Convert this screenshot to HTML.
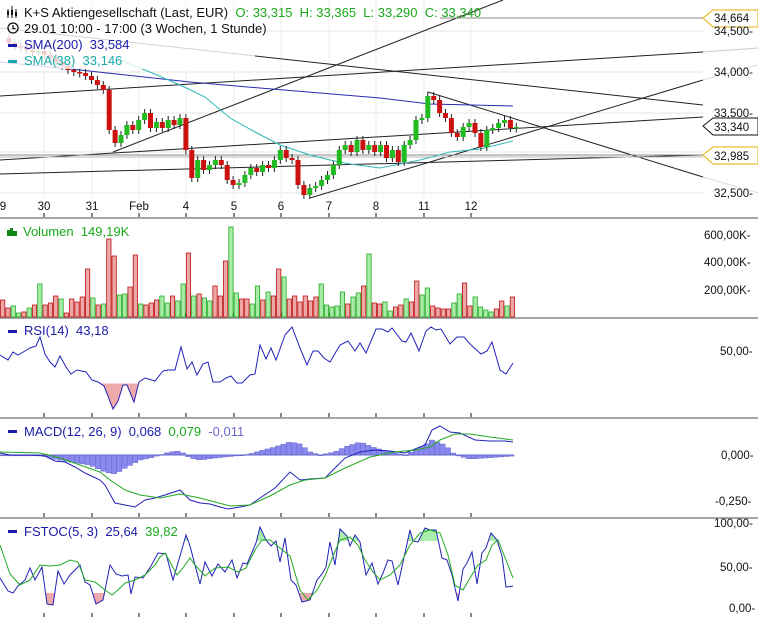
<!DOCTYPE html>
<html><head><meta charset="utf-8">
<style>
html,body{margin:0;padding:0;background:#fff;}
body{width:758px;height:618px;overflow:hidden;position:relative;font-family:"Liberation Sans",sans-serif;}
svg{position:absolute;left:0;top:0;}
.t{font-family:"Liberation Sans",sans-serif;font-size:13px;white-space:pre;}
.ax{font-family:"Liberation Sans",sans-serif;font-size:11.5px;fill:#111;}
</style></head><body>
<svg id="s" width="758" height="618" xmlns="http://www.w3.org/2000/svg">
<g id="grid"></g>
<g id="lines"></g>
<g id="cand"></g>
<g id="ind"></g>
<rect x="0" y="3" width="255" height="66" fill="#fff" opacity="0.8"/>
<g id="leg">
<text class="t" x="24" y="17" fill="#111">K+S Aktiengesellschaft (Last, EUR)  <tspan fill="#1aaa1a">O: 33,315  H: 33,365  L: 33,290  C: 33,340</tspan></text>
<text class="t" x="24" y="33" fill="#111">29.01 10:00 - 17:00 (3 Wochen, 1 Stunde)</text>
<text class="t" x="24" y="49" fill="#1a1aaa">SMA(200)  33,584</text>
<text class="t" x="24" y="65" fill="#1aaaaa">SMA(38)  33,146</text>
<rect x="8" y="44" width="9" height="3" fill="#1a1aaa"/>
<rect x="8" y="60" width="9" height="3" fill="#1aaaaa"/>
<circle cx="13" cy="28" r="5" fill="none" stroke="#111" stroke-width="1.3"/>
<path d="M13 25v3.5h2.5" stroke="#111" fill="none" stroke-width="1.2"/>
<path d="M8 9v9M12 6v12M16 9v9" stroke="#111"/>
<rect x="7" y="11" width="2" height="4" fill="#111"/><rect x="11" y="10" width="2" height="5" fill="#111"/><rect x="15" y="12" width="2" height="4" fill="#111"/>
<rect x="7" y="230" width="3" height="6" fill="#118811"/><rect x="10" y="228" width="3" height="8" fill="#118811"/><rect x="13" y="231" width="4" height="5" fill="#118811"/>
<text class="t" x="23" y="236" fill="#1aaa1a">Volumen  149,19K</text>
<rect x="8" y="330" width="9" height="3" fill="#1a1aaa"/>
<text class="t" x="24" y="335" fill="#1a1aaa">RSI(14)  43,18</text>
<rect x="8" y="430" width="9" height="3" fill="#1a1aaa"/>
<text class="t" x="24" y="436" fill="#1a1aaa">MACD(12, 26, 9)  0,068  <tspan fill="#1aaa1a">0,079</tspan>  <tspan fill="#6a6ad0">-0,011</tspan></text>
<rect x="8" y="530" width="9" height="3" fill="#1a1aaa"/>
<text class="t" x="24" y="536" fill="#1a1aaa">FSTOC(5, 3)  25,64  <tspan fill="#1aaa1a">39,82</tspan></text>
</g>
<g id="axis">
<path d="M703 18L713 10H758V27H713Z" fill="#fff" stroke="#e0b000"/>
<text class="ax" x="714" y="22">34,664</text>
<path d="M703 126L713 118H758V135H713Z" fill="#fff" stroke="#111"/>
<text class="ax" x="714" y="131">33,340</text>
<path d="M703 155L713 147H758V164H713Z" fill="#fff" stroke="#e0b000"/>
<text class="ax" x="714" y="160">32,985</text>
<text class="ax" x="714" y="35">34,500-</text>
<text class="ax" x="714" y="76">34,000-</text>
<text class="ax" x="714" y="117">33,500-</text>
<text class="ax" x="714" y="197">32,500-</text>
<text class="ax" x="704" y="239">600,00K-</text>
<text class="ax" x="704" y="266">400,00K-</text>
<text class="ax" x="704" y="294">200,00K-</text>
<text class="ax" x="720" y="355">50,00-</text>
<text class="ax" x="721" y="459">0,000-</text>
<text class="ax" x="715" y="505">-0,250-</text>
<text class="ax" x="714" y="527">100,00-</text>
<text class="ax" x="720" y="571">50,00-</text>
<text class="ax" x="729" y="612">0,00-</text>
<g class="ax" text-anchor="middle">
<text x="3" y="210">9</text><text x="44" y="210">30</text><text x="92" y="210">31</text><text x="139" y="210">Feb</text><text x="186" y="210">4</text><text x="234" y="210">5</text><text x="281" y="210">6</text><text x="329" y="210">7</text><text x="376" y="210">8</text><text x="424" y="210">11</text><text x="471" y="210">12</text>
</g>
</g>
</svg>
<script>
(function(){
var NS="http://www.w3.org/2000/svg";
function el(g,tag,a){var e=document.createElementNS(NS,tag);for(var k in a)e.setAttribute(k,a[k]);document.getElementById(g).appendChild(e);return e;}
function pl(g,pts,col,w){el(g,"polyline",{points:pts.map(function(p){return p.join(",")}).join(" "),fill:"none",stroke:col,"stroke-width":w||1});}
[31,72,113,152,193].forEach(function(y){el("grid","line",{x1:0,x2:703,y1:y,y2:y,stroke:"#e4e4e4"});});
var days=[44,92,139,186,234,281,329,376,424,471];
days.forEach(function(x){el("grid","line",{x1:x,x2:x,y1:0,y2:198,stroke:"#eeeeee"});
[213,313,413,513,613].forEach(function(y){el("grid","line",{x1:x,x2:x,y1:y,y2:y+4,stroke:"#111"});});});
[218,318,418,518].forEach(function(y){el("grid","line",{x1:0,x2:758,y1:y,y2:y,stroke:"#888","stroke-width":1.5});});
var L=[[113,152,503,0],[0,28,703,105],[0,96,703,52],[0,160,703,117],[0,174,703,155],[428,92,703,177],[310,198,703,80]];
L.forEach(function(l){el("lines","line",{x1:l[0],y1:l[1],x2:l[2],y2:l[3],stroke:"#222"});});
el("lines","line",{x1:0,y1:155,x2:703,y2:155,stroke:"#888"});
el("lines","line",{x1:0,y1:157,x2:703,y2:157,stroke:"#bbb"});
el("lines","line",{x1:440,y1:18,x2:703,y2:18,stroke:"#888"});
el("lines","line",{x1:703,y1:52,x2:758,y2:48,stroke:"#ccc"});
el("lines","line",{x1:703,y1:80,x2:758,y2:65,stroke:"#ddd"});
el("lines","line",{x1:703,y1:177,x2:758,y2:193,stroke:"#ddd"});
pl("lines",[[0,62],[80,70],[190,82],[260,88],[380,98],[430,104],[513,106]],"#2a2ab0");
pl("lines",[[120,60],[150,72],[180,85],[205,97],[230,118],[255,132],[280,145],[310,155],[330,160],[350,164],[380,168],[420,160],[450,152],[480,149],[513,141]],"#30b8b8");
var c=[38,43,46,47,50,52,51,55,58,62,66,70,72,73,76,80,85,90,130,143,135,125,130,120,113,128,122,128,120,125,118,150,178,160,170,165,160,165,180,185,183,175,168,172,165,168,160,150,158,160,185,195,188,186,180,175,165,150,145,152,140,150,145,152,145,158,150,162,145,140,120,118,96,100,113,118,133,137,127,123,133,147,130,128,123,120,128,127];
for(var i=1;i<c.length;i++){var x=3+i*5.9;var o=c[i-1],cl=c[i];var up=cl<o;var tp=Math.min(o,cl),bt=Math.max(o,cl);if(bt-tp<1.5)bt=tp+1.5;
el("cand","line",{x1:x,x2:x,y1:tp-4,y2:bt+4,stroke:"#222"});
el("cand","rect",{x:x-2.5,y:tp,width:5,height:bt-tp,fill:up?"#22bb22":"#cc1111"});}
var v=[300,308,306,313,312,308,305,284,305,303,296,299,313,299,302,297,269,298,305,304,239,256,295,294,287,255,304,305,303,300,296,303,296,301,284,253,296,294,298,301,286,296,261,227,293,299,299,304,286,300,292,296,269,277,299,296,302,296,301,297,284,305,307,306,292,304,297,293,286,254,303,304,302,311,307,305,299,302,281,295,288,306,308,309,309,303,294,283,306,297,307,310,312,309,301,306,297];
var col="rrggrgrgrrrgrrrrrgrgrrggrrgrrrggrggrgrggrrrggrrggrgrrgrrrrrrgggggrggrgrrggrrgrrggrrrrggrrggggrrg";
var n=v.length,st=515/n;
for(var i=0;i<n;i++){var g=col[i]=="g";el("ind","rect",{x:i*st+0.5,y:v[i],width:st-1,height:317-v[i],fill:g?"#a8eca8":"#eea8a8",stroke:g?"#22aa22":"#bb1111","stroke-width":0.8});}
var r=[[0,355],[8,360],[13,352],[18,355],[25,351],[30,348],[36,346],[40,337],[45,354],[50,362],[55,367],[60,356],[66,367],[71,374],[77,370],[86,372],[92,380],[98,382],[104,386],[113,409],[118,401],[123,385],[127,385],[134,402],[139,382],[145,378],[155,381],[163,371],[168,370],[175,370],[181,347],[187,369],[192,362],[197,375],[203,364],[208,362],[213,382],[220,382],[226,378],[231,376],[237,383],[242,383],[250,375],[255,374],[260,345],[266,359],[271,348],[276,360],[285,335],[292,327],[300,348],[307,365],[313,351],[318,351],[324,358],[330,362],[340,345],[348,341],[355,351],[360,343],[366,353],[376,329],[382,329],[388,332],[392,328],[402,341],[406,342],[411,333],[419,351],[426,331],[431,327],[436,330],[441,329],[450,344],[457,337],[464,337],[471,345],[481,354],[487,351],[492,342],[500,370],[506,374],[513,363]];
function fillArea(pts,th,color,below,id){var cp=el("ind","clipPath",{id:id});var rr=document.createElementNS(NS,"rect");rr.setAttribute("x",0);rr.setAttribute("width",520);if(below){rr.setAttribute("y",th);rr.setAttribute("height",100);}else{rr.setAttribute("y",th-100);rr.setAttribute("height",100);}cp.appendChild(rr);
var p=pts.map(function(q){return q.join(",")}).join(" ")+" 513,"+th+" 0,"+th;el("ind","polygon",{points:p,fill:color,"clip-path":"url(#"+id+")"});}
fillArea(r,383.5,"#eeaaaa",true,"c1");
pl("ind",r,"#2222bb");
var h=[[0,455],[40,455],[50,458],[70,462],[90,465],[105,472],[115,474],[125,468],[140,460],[150,458],[160,455],[170,452],[180,451],[190,458],[200,460],[215,458],[235,456],[250,454],[260,451],[275,447],[290,442],[300,444],[310,452],[320,455],[335,452],[345,447],[360,442],[375,448],[390,452],[405,455],[425,445],[432,440],[445,445],[455,455],[470,459],[485,458],[513,456]];
function interp(a,x){for(var i=1;i<a.length;i++){if(x<=a[i][0]){var t=(x-a[i-1][0])/(a[i][0]-a[i-1][0]);return a[i-1][1]+t*(a[i][1]-a[i-1][1]);}}return a[a.length-1][1];}
for(var i=0;i<97;i++){var x=i*5.3+2.6;var y=interp(h,x);el("ind","rect",{x:x-2.6,y:Math.min(y,455),width:5.3,height:Math.max(Math.abs(y-455),0.8),fill:"#8888ee",stroke:"#6666cc","stroke-width":0.5});}
pl("ind",[[0,455],[513,455]],"#6666cc");
pl("ind",[[0,453],[10,455],[30,455],[45,456],[55,461],[65,462],[75,467],[85,473],[100,480],[105,485],[115,503],[125,505],[135,507],[145,500],[155,498],[165,495],[180,490],[190,500],[200,503],[210,504],[220,507],[228,509],[240,507],[250,505],[260,498],[275,488],[290,472],[300,480],[310,479],[325,478],[335,468],[345,458],[360,452],[375,450],[390,451],[405,453],[415,449],[425,445],[432,430],[440,426],[450,432],[460,433],[475,440],[490,441],[505,441],[513,442]],"#2222bb");
pl("ind",[[0,452],[40,453],[60,458],[80,465],[100,472],[110,480],[125,490],[140,495],[160,498],[180,494],[200,498],[230,506],[250,505],[270,496],[290,485],[305,480],[325,478],[345,468],[370,457],[395,452],[415,450],[430,447],[440,440],[455,434],[470,434],[490,437],[513,440]],"#22aa22");
var f=[[0,578],[8,591],[13,593],[18,586],[25,580],[30,568],[35,580],[42,567],[47,604],[53,605],[58,571],[64,584],[70,575],[80,565],[85,582],[90,585],[96,604],[103,600],[110,565],[116,574],[122,576],[128,575],[131,594],[135,577],[143,578],[151,566],[158,553],[166,554],[173,580],[180,556],[186,535],[190,546],[200,584],[205,562],[212,576],[218,564],[225,572],[232,560],[237,578],[243,563],[247,564],[256,543],[260,527],[266,540],[271,546],[276,541],[280,562],[285,538],[291,580],[296,585],[302,602],[310,600],[317,580],[322,574],[326,567],[330,542],[335,565],[340,529],[347,536],[350,546],[355,535],[360,542],[366,575],[372,563],[378,584],[383,573],[388,560],[392,561],[398,585],[403,562],[410,530],[413,541],[418,542],[425,528],[430,530],[436,530],[442,558],[447,560],[452,575],[458,601],[463,569],[467,563],[472,552],[477,584],[482,553],[486,548],[491,533],[497,540],[502,556],[506,587],[513,586]];
fillArea(f,593,"#eeaaaa",true,"c2");
fillArea(f,541,"#aaeeaa",false,"c3");
pl("ind",f,"#2222bb");
pl("ind",[[0,545],[10,574],[20,585],[30,580],[40,565],[50,566],[60,565],[70,560],[78,562],[85,580],[95,582],[105,590],[112,595],[118,590],[125,583],[135,580],[145,575],[155,565],[160,557],[165,553],[170,562],[177,575],[183,568],[190,558],[195,565],[205,576],[215,568],[228,567],[238,572],[246,568],[255,550],[262,540],[270,540],[280,548],[290,556],[300,590],[308,600],[317,590],[325,576],[333,556],[340,540],[350,537],[358,545],[365,560],[373,572],[380,580],[390,575],[400,565],[410,545],[420,533],[430,530],[440,533],[448,555],[455,585],[463,590],[470,578],[478,565],[486,560],[492,545],[498,540],[506,560],[513,578]],"#22aa22");
})();
</script>
</body></html>
